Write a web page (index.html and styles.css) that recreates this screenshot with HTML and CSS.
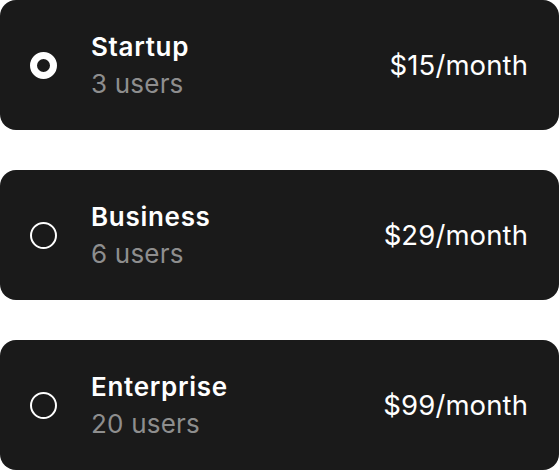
FILE: index.html
```html
<!DOCTYPE html>
<html>
<head>
<meta charset="utf-8">
<link rel="stylesheet" href="styles.css">
</head>
<body>
<div class="plans">
  <div class="plan selected">
    <span class="radio"></span>
    <div class="info">
      <div class="name">Startup</div>
      <div class="users">3 users</div>
    </div>
    <div class="price">$15/month</div>
  </div>
  <div class="plan">
    <span class="radio"></span>
    <div class="info">
      <div class="name">Business</div>
      <div class="users">6 users</div>
    </div>
    <div class="price">$29/month</div>
  </div>
  <div class="plan">
    <span class="radio"></span>
    <div class="info">
      <div class="name">Enterprise</div>
      <div class="users">20 users</div>
    </div>
    <div class="price">$99/month</div>
  </div>
</div>
</body>
</html>
```
FILE: styles.css
```css
html, body {
  margin: 0;
  padding: 0;
  background: #ffffff;
}
body {
  font-family: Inter, "Liberation Sans", sans-serif;
}
.plans {
  display: flex;
  flex-direction: column;
  gap: 40px;
  width: 559px;
}
.plan {
  height: 130px;
  box-sizing: border-box;
  background: #1a1a1a;
  border-radius: 16px;
  display: flex;
  align-items: center;
  padding: 0 31px 0 30px;
}
.radio {
  width: 27px;
  height: 27px;
  box-sizing: border-box;
  border: 2.5px solid #ffffff;
  border-radius: 50%;
  flex: none;
}
.plan.selected .radio {
  border-width: 7.5px;
}
.info {
  margin-left: 34px;
  flex: 1;
  display: flex;
  flex-direction: column;
}
.name {
  color: #ffffff;
  font-size: 26px;
  font-weight: 600;
  line-height: 37px;
  letter-spacing: 0.7px;
}
.users {
  color: #8e8e8e;
  font-size: 26px;
  font-weight: 400;
  line-height: 37px;
  letter-spacing: 0.2px;
}
.price {
  color: #ffffff;
  font-size: 27.5px;
  font-weight: 400;
  letter-spacing: 0.1px;
}
```
